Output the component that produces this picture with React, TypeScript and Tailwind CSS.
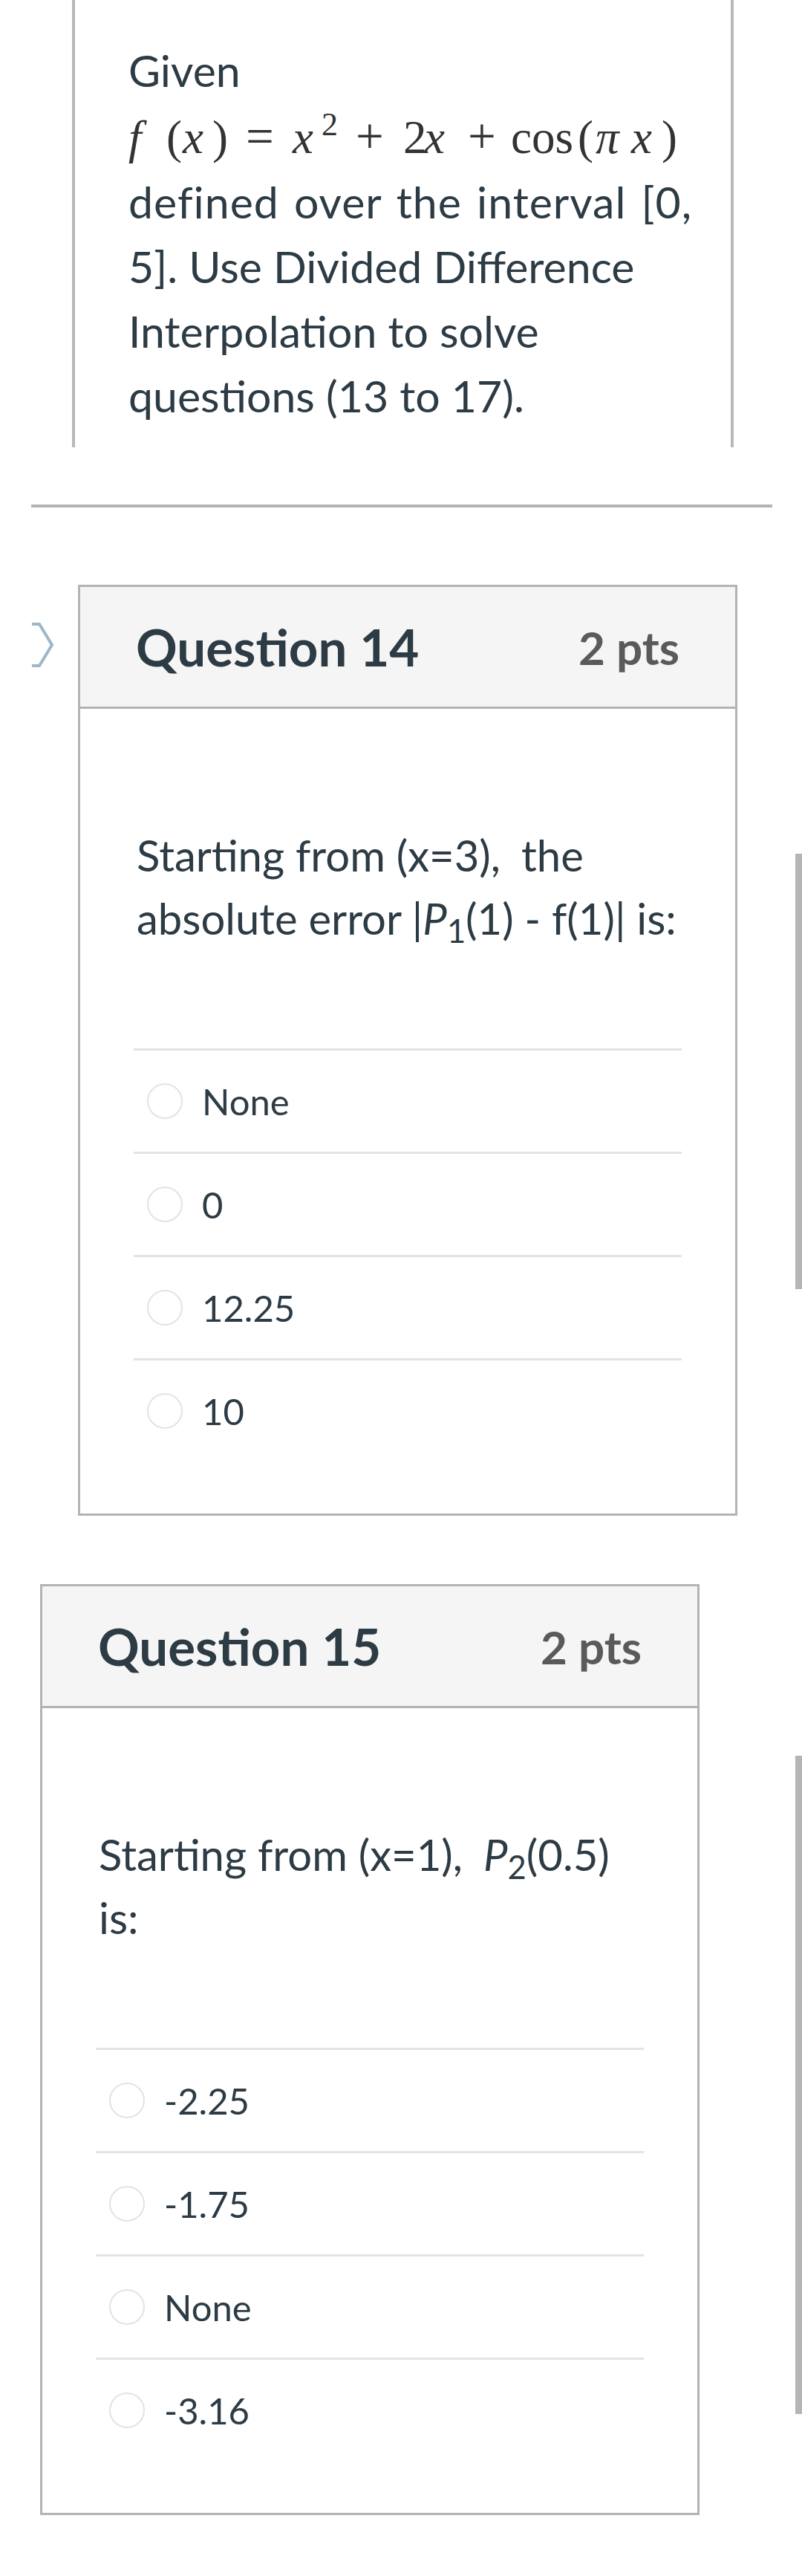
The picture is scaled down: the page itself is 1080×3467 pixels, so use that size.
import React from "react";

const Radio = () => (
  <span className="block w-[48px] h-[48px] rounded-full border-2 border-[#e3e3e3] shrink-0" />
);

function Answers({ items }: { items: string[] }) {
  return (
    <div className="mt-[133px]">
      {items.map((a, i) => (
        <div
          key={i}
          className="h-[139px] border-t-[3px] border-[#e3e3e3] flex items-center pl-[18px]"
        >
          <Radio />
          <span className="ml-[26px] text-[49px] leading-none text-[#2d3b45]">{a}</span>
        </div>
      ))}
    </div>
  );
}

function Card({
  num,
  className,
  children,
  answers,
  chevron,
}: {
  num: string;
  className: string;
  children: React.ReactNode;
  answers: string[];
  chevron?: boolean;
}) {
  return (
    <div className={`relative w-[888px] border-[3px] border-[#b3b3b3] ${className}`}>
      {chevron && (
        <svg
          className="absolute left-[-66px] top-[47px]"
          width="32"
          height="62"
          viewBox="0 0 32 62"
          fill="none"
        >
          <path
            d="M1 3 L11 3 L28 31 L11 59 L1 59"
            stroke="#9db6c8"
            strokeWidth="4"
            strokeLinejoin="miter"
          />
        </svg>
      )}
      <div className="h-[164px] bg-[#f5f5f5] border-b-[3px] border-[#b3b3b3] flex items-center justify-between pl-[75px] pr-[75px]">
        <span className="text-[69px] font-bold text-[#2d3b45] leading-none">Question {num}</span>
        <span className="text-[62px] font-bold text-[#5a5a5a] leading-none">2 pts</span>
      </div>
      <div className="px-[72px] pt-[154px] pb-[70px]">
        <div className="pl-[4px] text-[58px] leading-[85px] text-[#2d3b45]">{children}</div>
        <Answers items={answers} />
      </div>
    </div>
  );
}

function Formula() {
  return (
    <div className="h-[90px] flex items-baseline font-['Liberation_Serif',serif] text-[63px] leading-[90px] text-[#333]">
      <span className="w-[51px] italic">f</span>
      <span className="w-[22px]">(</span>
      <span className="w-[40px] italic">x</span>
      <span className="w-[45px]">)</span>
      <span className="w-[63px] text-[67px]">=</span>
      <span className="w-[39px] italic">x</span>
      <span className="w-[46px] text-[44px] relative top-[-24px]">2</span>
      <span className="w-[64px] text-[67px]">+</span>
      <span className="w-[28px]">2</span>
      <span className="w-[59px] italic">x</span>
      <span className="w-[58px] text-[67px]">+</span>
      <span className="w-[90px]">cos</span>
      <span className="w-[24px]">(</span>
      <span className="w-[48px] italic">π</span>
      <span className="w-[41px] italic">x</span>
      <span className="w-[17px]">)</span>
    </div>
  );
}

export default function App() {
  return (
    <div className="relative w-[1080px] min-h-[3467px] bg-white font-['Lato','Liberation_Sans',sans-serif] text-[#2d3b45]">
      {/* intro panel */}
      <div className="ml-[97px] w-[891px] h-[602px] border-x-4 border-[#b9b9b9] pt-[51px] pl-[72px]">
        <div className="text-[59px] leading-[87px]">
          <div>Given</div>
          <Formula />
          <div className="[word-spacing:4px] tracking-[1px]">defined over the interval [0,</div>
          <div>5]. Use Divided Difference</div>
          <div>Interpolation to solve</div>
          <div>questions (13 to 17).</div>
        </div>
      </div>

      {/* divider */}
      <div className="ml-[42px] w-[998px] h-[4px] bg-[#b3b3b3] mt-[77px]" />

      <Card
        num="14"
        className="ml-[105px] mt-[104px]"
        chevron
        answers={["None", "0", "12.25", "10"]}
      >
        <div>
          Starting from (x=3),<span className="ml-[28px]">the</span>
        </div>
        <div>
          absolute error |<span className="italic">P</span>
          <sub>1</sub>(1) - f(1)| is:
        </div>
      </Card>

      <Card
        num="15"
        className="ml-[54px] mt-[92px]"
        answers={["-2.25", "-1.75", "None", "-3.16"]}
      >
        <div>
          Starting from (x=1),<span className="ml-[28px] italic">P</span>
          <sub>2</sub>(0.5)
        </div>
        <div>is:</div>
      </Card>

      {/* right-edge scroll indicators */}
      <div className="absolute left-[1071px] top-[1149px] w-[9px] h-[586px] bg-[#b5b5b5]" />
      <div className="absolute left-[1071px] top-[2363px] w-[9px] h-[886px] bg-[#b5b5b5]" />
    </div>
  );
}
